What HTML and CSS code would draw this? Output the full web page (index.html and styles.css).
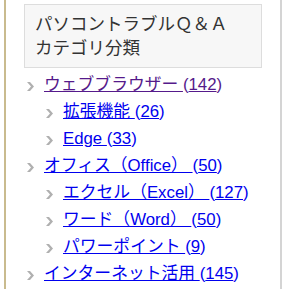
FILE: index.html
```html
<!DOCTYPE html>
<html lang="ja">
<head>
  <meta charset="UTF-8" />
  <meta name="viewport" content="width=device-width, initial-scale=1.0" />
  <title>カテゴリ分類</title>
  <link rel="stylesheet" href="styles.css">
</head>
<body>
  <div class="sidebar">
    <div class="widget">
      <h3 class="widget-title">パソコントラブルＱ＆Ａ<br>カテゴリ分類</h3>
      <ul class="cat-list">
        <li class="visited">
          <svg class="arrow" viewBox="0 0 7 9"><polygon points="0,0 3,0 7,4.5 3,9 0,9 4,4.5" /></svg><a href="#">ウェブブラウザー </a>(<a href="#">142</a>)
          <ul class="cat-list sub">
            <li><svg class="arrow" viewBox="0 0 7 9"><polygon points="0,0 3,0 7,4.5 3,9 0,9 4,4.5" /></svg><a href="#">拡張機能 </a>(<a href="#">26</a>)</li>
            <li><svg class="arrow" viewBox="0 0 7 9"><polygon points="0,0 3,0 7,4.5 3,9 0,9 4,4.5" /></svg><a href="#">Edge </a>(<a href="#">33</a>)</li>
          </ul>
        </li>
        <li>
          <svg class="arrow" viewBox="0 0 7 9"><polygon points="0,0 3,0 7,4.5 3,9 0,9 4,4.5" /></svg><a href="#">オフィス（Office） </a>(<a href="#">50</a>)
          <ul class="cat-list sub">
            <li><svg class="arrow" viewBox="0 0 7 9"><polygon points="0,0 3,0 7,4.5 3,9 0,9 4,4.5" /></svg><a href="#">エクセル（Excel） </a>(<a href="#">127</a>)</li>
            <li><svg class="arrow" viewBox="0 0 7 9"><polygon points="0,0 3,0 7,4.5 3,9 0,9 4,4.5" /></svg><a href="#">ワード（Word） </a>(<a href="#">50</a>)</li>
            <li><svg class="arrow" viewBox="0 0 7 9"><polygon points="0,0 3,0 7,4.5 3,9 0,9 4,4.5" /></svg><a href="#">パワーポイント </a>(<a href="#">9</a>)</li>
          </ul>
        </li>
        <li><svg class="arrow" viewBox="0 0 7 9"><polygon points="0,0 3,0 7,4.5 3,9 0,9 4,4.5" /></svg><a href="#">インターネット活用 </a>(<a href="#">145</a>)</li>
      </ul>
    </div>
  </div>
</body>
</html>
```

FILE: styles.css
```css
* {
  box-sizing: border-box;
}

body {
  margin: 0;
  background-color: #ffffff;
  font-family: "Liberation Sans", "Noto Sans CJK JP", sans-serif;
}

.sidebar {
  margin-left: 4px;
  width: 278px;
  height: 289px;
  border-left: 2px solid #c9bb8e;
  border-right: 2px solid #d4d4d4;
  padding: 4px 18px 0 18px;
  overflow: hidden;
}

.widget-title {
  margin: 0;
  padding: 7px 10px 7px 10px;
  background-color: #f7f7f7;
  border: 1px solid #dddddd;
  color: #333333;
  font-size: 17.5px;
  font-weight: normal;
  line-height: 24px;
}

.cat-list {
  list-style: none;
  margin: 3px 0 0 0;
  padding: 0;
  font-size: 16.8px;
  line-height: 27px;
}

.cat-list li {
  color: #0000ee;
  white-space: nowrap;
}

.cat-list li.visited {
  color: #551a8b;
}

.cat-list li.visited .sub li {
  color: #0000ee;
}

.cat-list a {
  color: inherit;
  text-decoration: underline;
}

.cat-list.sub {
  margin: 0;
  padding-left: 19px;
}

.arrow {
  width: 7px;
  height: 9px;
  margin: 0 10px 0 3px;
  vertical-align: -1px;
}

.arrow polygon {
  fill: #b0b0b0;
}
```
